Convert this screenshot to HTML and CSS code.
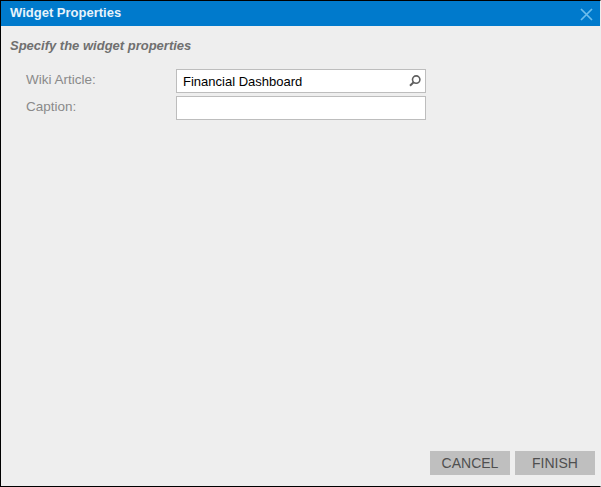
FILE: index.html
```html
<!DOCTYPE html>
<html lang="en">
<head>
    <meta charset="UTF-8">
    <meta name="viewport" content="width=device-width, initial-scale=1.0">
    <title>Widget Properties</title>
    <link rel="stylesheet" href="styles.css">
</head>
<body>
    <div class="dialog">
        <div class="dialog-header">
            <span class="dialog-title">Widget Properties</span>
            <svg class="close-icon" width="13" height="13" viewBox="0 0 13 13">
                <path d="M1 1L12 12M12 1L1 12" stroke="#6dbdec" stroke-width="1.7" fill="none"/>
            </svg>
        </div>
        <div class="dialog-body">
            <div class="instructions">Specify the widget properties</div>
            <div class="form">
                <label class="form-label">Wiki Article:</label>
                <div class="form-input">
                    <span>Financial Dashboard</span>
                    <svg class="search-icon" width="12" height="12" viewBox="0 0 12 12">
                        <circle cx="7.2" cy="4.6" r="3.7" stroke="#5f5f5f" stroke-width="1.6" fill="none"/>
                        <path d="M4.6 7.2L1 10.8" stroke="#5f5f5f" stroke-width="2" fill="none"/>
                    </svg>
                </div>
                <label class="form-label">Caption:</label>
                <div class="form-input"></div>
            </div>
        </div>
        <div class="dialog-footer">
            <button class="btn">CANCEL</button>
            <button class="btn">FINISH</button>
        </div>
    </div>
</body>
</html>
```

FILE: styles.css
```css
html, body {
    height: 100%;
}

body {
    margin: 0;
    font-family: "Liberation Sans", Arial, sans-serif;
    font-size: 13px;
}

.dialog {
    box-sizing: border-box;
    height: 487px;
    width: 601px;
    display: flex;
    flex-direction: column;
    background-color: #eeeeee;
    border: 1px solid #000;
    border-right-color: #eeeeee;
}

.dialog-header {
    height: 25px;
    flex: none;
    display: flex;
    align-items: center;
    justify-content: space-between;
    padding: 0 7px 0 9px;
    background-color: #007acc;
}

.dialog-title {
    margin-bottom: 2px;
    color: #e6f3fb;
    font-weight: bold;
}

.close-icon {
    margin-top: 2px;
}

.dialog-body {
    flex: 1;
    padding: 12px 9px 0;
}

.instructions {
    color: #707070;
    font-size: 13px;
    font-weight: bold;
    font-style: italic;
    line-height: 15px;
}

.form {
    display: grid;
    grid-template-columns: 150px 250px;
    grid-auto-rows: 24px;
    row-gap: 3px;
    margin-top: 16px;
    padding-left: 16px;
}

.form-label {
    color: #8a8a8a;
    font-size: 13.5px;
    line-height: 22px;
}

.form-input {
    box-sizing: border-box;
    display: flex;
    align-items: center;
    justify-content: space-between;
    padding: 0 4px 0 6px;
    background-color: #fff;
    border: 1px solid #bdbdbd;
    color: #000;
}

.dialog-footer {
    display: flex;
    justify-content: flex-end;
    gap: 5px;
    padding: 0 5px 11px 0;
}

.btn {
    width: 80px;
    height: 24px;
    padding: 0;
    border: none;
    background-color: #bfbfbf;
    color: #4f4f4f;
    font-family: inherit;
    font-size: 14px;
}
```
